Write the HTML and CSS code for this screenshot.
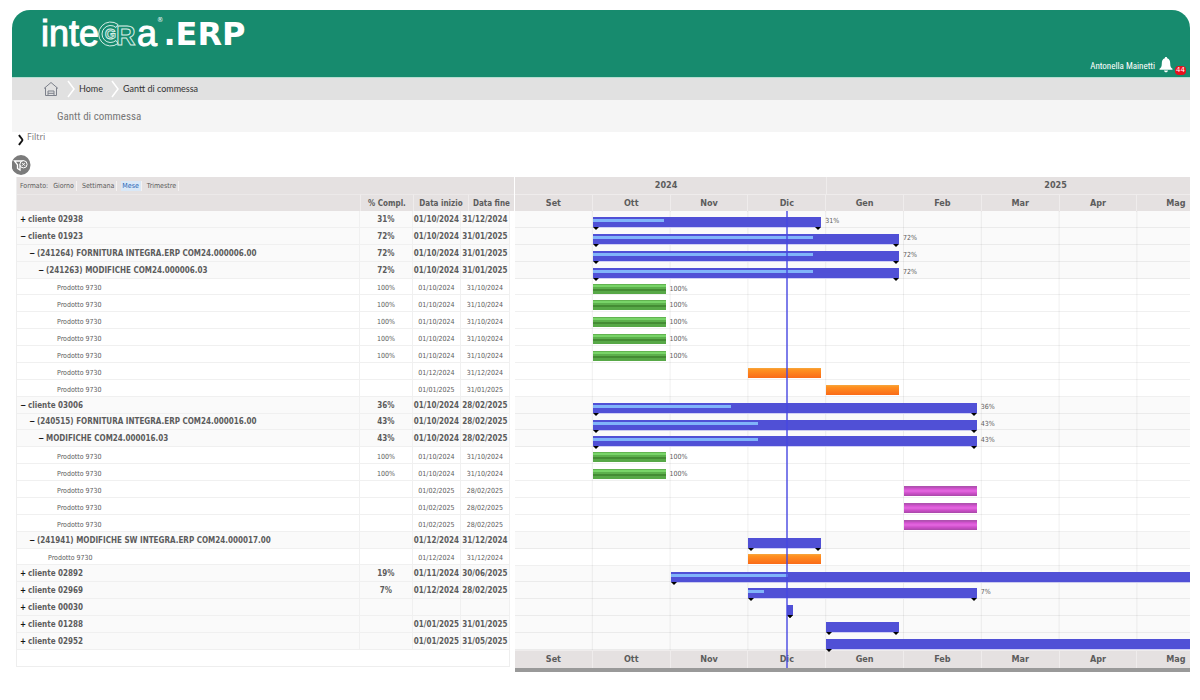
FILE: index.html
```html
<!DOCTYPE html>
<html lang="it">
<head>
<meta charset="utf-8">
<title>Gantt di commessa</title>
<link rel="stylesheet" href="styles.css">
</head>
<body>
<header class="top">
  <div class="logo"><span class="logo-light">inte</span><svg class="logo-mark" width="38" height="26" viewBox="0 0 38 26" fill="none" stroke="#d6eee6"><path d="M19 3.500A12 12 0 1 0 19 22.500M17 6.500A8.500 8.500 0 1 0 17 19.500M19 3.500L17 6.500M19 22.500L17 19.500"/><text class="mark-g" x="6" y="18">G</text><text class="mark-r" x="17" y="24">R</text></svg><span class="logo-light">a</span><sup class="logo-reg">®</sup><span class="logo-bold">.ERP</span></div>
  <div class="user">
    <a href="#" class="user-name">Antonella Mainetti</a>
    <button class="bell" aria-label="Notifiche">
      <svg width="14" height="16" viewBox="0 0 14 16"><path fill="#fff" d="M7 0c.8 0 1.200.5 1.200 1.300C10.600 2 11.200 4 11.200 6.500c0 3 .8 4.500 2.300 5.300v1H.5v-1c1.500-.8 2.300-2.300 2.300-5.300C2.800 4 3.400 2 5.800 1.300 5.800.5 6.200 0 7 0zM5 13.500h4c-.2 1.200-1 1.800-2 1.800s-1.800-.6-2-1.800z"/></svg>
    </button>
    <span class="badge">44</span>
  </div>
</header>
<nav class="crumbs">
  <a href="#" class="home" aria-label="Inizio"><svg width="16" height="16" viewBox="0 0 16 16" fill="none" stroke="#7d818b"><path d="M1 7.500L8 1.500l7 6M2.500 6.500V14.500h11V6.500M5 14.500V10h6v4.500M5 12.300h6"/></svg></a>
  <svg class="sep" width="8" height="18" viewBox="0 0 8 18"><path d="M1 1l6 8-6 8" fill="none" stroke="#fff" stroke-width="1.500"/></svg>
  <a href="#">Home</a>
  <svg class="sep" width="8" height="18" viewBox="0 0 8 18"><path d="M1 1l6 8-6 8" fill="none" stroke="#fff" stroke-width="1.500"/></svg>
  <a href="#">Gantt di commessa</a>
</nav>
<h1 class="title">Gantt di commessa</h1>
<button class="filters"><svg width="6" height="12" viewBox="0 0 6 12"><path d="M1 1c1 2 3 3.500 3.500 5C4 7.500 2 9 1 11" fill="none" stroke="#111" stroke-width="1.800"/></svg><span>Filtri</span></button>
<button class="clear" aria-label="Rimuovi filtri"><svg width="19" height="20" viewBox="0 0 19 20"><ellipse cx="9" cy="10" rx="9.500" ry="10" fill="#7b7b7b"/><path d="M2.500 6h8.500L8 9.800V15l-2.500-1.500V9.800z" fill="#7b7b7b" stroke="#fff" stroke-width="1.300"/><circle cx="11.500" cy="9.300" r="3.600" fill="#7b7b7b" stroke="#fff"/><path d="M10 7.800l3 3m0-3l-3 3" stroke="#fff"/></svg></button>

<main class="gantt">
  <table class="tasks">
    <colgroup><col><col class="c-pct"><col class="c-start"><col class="c-shift"><col class="c-end"><col class="c-edge"></colgroup>
    <thead>
      <tr><td colspan="6" class="format"><span>Formato:</span><button>Giorno</button><button>Settimana</button><button class="on">Mese</button><button>Trimestre</button></td></tr>
      <tr><th></th><th>% Compl.</th><th colspan="2">Data inizio</th><th colspan="2">Data fine</th></tr>
    </thead>
    <tbody>
      <tr class="group"><td><button>+</button>cliente 02938</td><td>31%</td><td>01/10/2024</td><td colspan="2">31/12/2024</td><td></td></tr>
      <tr class="group"><td><button>−</button>cliente 01923</td><td>72%</td><td>01/10/2024</td><td colspan="2">31/01/2025</td><td></td></tr>
      <tr class="group l1"><td><button>−</button>(241264) FORNITURA INTEGRA.ERP COM24.000006.00</td><td>72%</td><td>01/10/2024</td><td colspan="2">31/01/2025</td><td></td></tr>
      <tr class="group l2"><td><button>−</button>(241263) MODIFICHE COM24.000006.03</td><td>72%</td><td>01/10/2024</td><td colspan="2">31/01/2025</td><td></td></tr>
      <tr class="l4"><td>Prodotto 9730</td><td>100%</td><td>01/10/2024</td><td colspan="2">31/10/2024</td><td></td></tr>
      <tr class="l4"><td>Prodotto 9730</td><td>100%</td><td>01/10/2024</td><td colspan="2">31/10/2024</td><td></td></tr>
      <tr class="l4"><td>Prodotto 9730</td><td>100%</td><td>01/10/2024</td><td colspan="2">31/10/2024</td><td></td></tr>
      <tr class="l4"><td>Prodotto 9730</td><td>100%</td><td>01/10/2024</td><td colspan="2">31/10/2024</td><td></td></tr>
      <tr class="l4"><td>Prodotto 9730</td><td>100%</td><td>01/10/2024</td><td colspan="2">31/10/2024</td><td></td></tr>
      <tr class="l4"><td>Prodotto 9730</td><td></td><td>01/12/2024</td><td colspan="2">31/12/2024</td><td></td></tr>
      <tr class="l4"><td>Prodotto 9730</td><td></td><td>01/01/2025</td><td colspan="2">31/01/2025</td><td></td></tr>
      <tr class="group"><td><button>−</button>cliente 03006</td><td>36%</td><td>01/10/2024</td><td colspan="2">28/02/2025</td><td></td></tr>
      <tr class="group l1"><td><button>−</button>(240515) FORNITURA INTEGRA.ERP COM24.000016.00</td><td>43%</td><td>01/10/2024</td><td colspan="2">28/02/2025</td><td></td></tr>
      <tr class="group l2"><td><button>−</button>MODIFICHE COM24.000016.03</td><td>43%</td><td>01/10/2024</td><td colspan="2">28/02/2025</td><td></td></tr>
      <tr class="l4"><td>Prodotto 9730</td><td>100%</td><td>01/10/2024</td><td colspan="2">31/10/2024</td><td></td></tr>
      <tr class="l4"><td>Prodotto 9730</td><td>100%</td><td>01/10/2024</td><td colspan="2">31/10/2024</td><td></td></tr>
      <tr class="l4"><td>Prodotto 9730</td><td></td><td>01/02/2025</td><td colspan="2">28/02/2025</td><td></td></tr>
      <tr class="l4"><td>Prodotto 9730</td><td></td><td>01/02/2025</td><td colspan="2">28/02/2025</td><td></td></tr>
      <tr class="l4"><td>Prodotto 9730</td><td></td><td>01/02/2025</td><td colspan="2">28/02/2025</td><td></td></tr>
      <tr class="group l1"><td><button>−</button>(241941) MODIFICHE SW INTEGRA.ERP COM24.000017.00</td><td></td><td>01/12/2024</td><td colspan="2">31/12/2024</td><td></td></tr>
      <tr class="l3"><td>Prodotto 9730</td><td></td><td>01/12/2024</td><td colspan="2">31/12/2024</td><td></td></tr>
      <tr class="group"><td><button>+</button>cliente 02892</td><td>19%</td><td>01/11/2024</td><td colspan="2">30/06/2025</td><td></td></tr>
      <tr class="group"><td><button>+</button>cliente 02969</td><td>7%</td><td>01/12/2024</td><td colspan="2">28/02/2025</td><td></td></tr>
      <tr class="group"><td><button>+</button>cliente 00030</td><td></td><td></td><td colspan="2"></td><td></td></tr>
      <tr class="group"><td><button>+</button>cliente 01288</td><td></td><td>01/01/2025</td><td colspan="2">31/01/2025</td><td></td></tr>
      <tr class="group"><td><button>+</button>cliente 02952</td><td></td><td>01/01/2025</td><td colspan="2">31/05/2025</td><td></td></tr>
    </tbody>
    <tfoot><tr><td colspan="5"></td><td></td></tr></tfoot>
  </table>

  <section class="chart" aria-label="Diagramma">
    <div class="canvas">
      <div class="years"><span class="y24">2024</span><span class="y25">2025</span></div>
      <div class="months"><span>Set</span><span>Ott</span><span>Nov</span><span>Dic</span><span>Gen</span><span>Feb</span><span>Mar</span><span>Apr</span><span>Mag</span><span></span></div>
      <div class="lanes">
        <div class="lane group"><div class="bar sum" style="--from:1;--len:3"><i style="width:31%"></i><b>31%</b></div></div>
        <div class="lane group"><div class="bar sum" style="--from:1;--len:4"><i style="width:72%"></i><b>72%</b></div></div>
        <div class="lane group"><div class="bar sum" style="--from:1;--len:4"><i style="width:72%"></i><b>72%</b></div></div>
        <div class="lane group"><div class="bar sum" style="--from:1;--len:4"><i style="width:72%"></i><b>72%</b></div></div>
        <div class="lane"><div class="bar green" style="--from:1;--len:1"><b>100%</b></div></div>
        <div class="lane"><div class="bar green" style="--from:1;--len:1"><b>100%</b></div></div>
        <div class="lane"><div class="bar green" style="--from:1;--len:1"><b>100%</b></div></div>
        <div class="lane"><div class="bar green" style="--from:1;--len:1"><b>100%</b></div></div>
        <div class="lane"><div class="bar green" style="--from:1;--len:1"><b>100%</b></div></div>
        <div class="lane"><div class="bar orange" style="--from:3;--len:1"></div></div>
        <div class="lane"><div class="bar orange" style="--from:4;--len:1"></div></div>
        <div class="lane group"><div class="bar sum" style="--from:1;--len:5"><i style="width:36%"></i><b>36%</b></div></div>
        <div class="lane group"><div class="bar sum" style="--from:1;--len:5"><i style="width:43%"></i><b>43%</b></div></div>
        <div class="lane group"><div class="bar sum" style="--from:1;--len:5"><i style="width:43%"></i><b>43%</b></div></div>
        <div class="lane"><div class="bar green" style="--from:1;--len:1"><b>100%</b></div></div>
        <div class="lane"><div class="bar green" style="--from:1;--len:1"><b>100%</b></div></div>
        <div class="lane"><div class="bar purple" style="--from:5;--len:1"></div></div>
        <div class="lane"><div class="bar purple" style="--from:5;--len:1"></div></div>
        <div class="lane"><div class="bar purple" style="--from:5;--len:1"></div></div>
        <div class="lane group"><div class="bar sum" style="--from:3;--len:1"></div></div>
        <div class="lane"><div class="bar orange" style="--from:3;--len:1"></div></div>
        <div class="lane group"><div class="bar sum" style="--from:2;--len:8"><i style="width:19%"></i></div></div>
        <div class="lane group"><div class="bar sum" style="--from:3;--len:3"><i style="width:7%"></i><b>7%</b></div></div>
        <div class="lane group"><div class="bar sum day" style="--from:3.5"></div></div>
        <div class="lane group"><div class="bar sum" style="--from:4;--len:1"></div></div>
        <div class="lane group"><div class="bar sum" style="--from:4;--len:5"></div></div>
      </div>
      <div class="months foot"><span>Set</span><span>Ott</span><span>Nov</span><span>Dic</span><span>Gen</span><span>Feb</span><span>Mar</span><span>Apr</span><span>Mag</span><span></span></div>
      <div class="today" style="--from:3.5"></div>
    </div>
    <div class="scroll"></div>
  </section>
</main>
</body>
</html>
```
FILE: styles.css
```css
* { box-sizing: border-box; }
body {
  margin: 0;
  padding: 10px 10px 0 12px;
  background: #fff;
  color: #5c5c5c;
  font-family: "DejaVu Sans Condensed", "DejaVu Sans", sans-serif;
  font-size: 8px;
}
button { border: 0; padding: 0; margin: 0; background: none; font: inherit; color: inherit; cursor: pointer; }
a { color: inherit; text-decoration: none; }
svg { display: block; }

.top {
  display: flex;
  justify-content: space-between;
  height: 68px;
  padding-left: 29px;
  background: #178b6e;
  border-bottom: 1px solid #b5ddd1;
  border-radius: 18px 18px 0 0;
  color: #fff;
}
.logo { display: flex; align-items: center; height: 48px; }
.logo-light { font: 36px/44px "Liberation Sans", sans-serif; -webkit-text-stroke: 1px #fff; }
.logo-mark { overflow: visible; }
.logo-mark text { font-family: "Liberation Sans", sans-serif; font-weight: bold; }
.mark-g { font-size: 14px; }
.mark-r { font-size: 27px; }
.logo-reg { align-self: flex-start; font-size: 7px; line-height: 20px; }
.logo-bold { font: bold 32px/48px "DejaVu Sans", sans-serif; }
.user { display: flex; align-items: flex-end; padding: 0 4px 2px 0; }
.user-name { font: 9px/18px "Roboto Condensed", "Liberation Sans", sans-serif; }
.bell { margin: 0 2px 2px 4px; }
.badge { background: #e8101c; border-radius: 4px; padding: 0 1px; font: 7px/9px "DejaVu Sans", sans-serif; }

.crumbs { display: flex; align-items: center; gap: 4px; height: 22px; padding-left: 31px; background: #e1e1e1; color: #333; font: 9px/20px Lato, sans-serif; }
.sep { margin-left: 4px; }
.title { margin: 0; padding-left: 45px; background: #f5f5f5; color: #777; font: 11px/34px "Roboto Condensed", "Liberation Sans", sans-serif; height: 32px; }
.filters { display: flex; align-items: center; gap: 3px; margin-left: 6px; color: #777; font: 9px/10px "Open Sans", sans-serif; }
.filters svg { margin-top: 2px; }
.filters span { padding-bottom: 4px; }
.clear { display: block; margin: 9px 0 2px; }

.gantt { display: flex; align-items: flex-start; padding-left: 4px; }
.tasks { flex: 0 0 498px; width: 498px; height: 490px; table-layout: fixed; border-collapse: separate; border-spacing: 0; border-left: 1px solid #eee; margin-right: 1px; }
.c-pct { width: 53px; }
.c-start { width: 48px; }
.c-shift { width: 7px; }
.c-end { width: 42px; }
.c-edge { width: 4px; }
.tasks th, .tasks td { padding: 1px 0 0; line-height: 10px; text-align: center; white-space: nowrap; }
.tasks thead tr, .tasks tfoot tr { height: 17px; }
.tasks thead { background: #e5e1e1; }
.tasks thead th { font-size: 8px; border-top: 1px solid #ece9e9; border-left: 1px solid #efecec; }
.tasks thead th:first-child { border-left: 0; }
.tasks .format { text-align: left; font-size: 7px; padding-left: 3px; }
.format button { margin-left: 4px; padding: 0 2px 0 1px; border-right: 1px solid #f4f2f2; }
.format .on { background: #d9e8f7; color: #2864b4; }
.tasks tbody td { padding: 4px 0 0; font-size: 7px; border-right: 1px solid #f0f0f0; border-bottom: 1px solid #f0f0f0; }
.tasks tbody td:first-child { text-align: left; padding-left: 3px; }
.tasks tbody td:last-child, .tasks tfoot td:last-child { border: 0; background: #fff; }
.tasks tbody .group td { padding-top: 3px; padding-bottom: 1px; font-size: 8px; font-weight: bold; background: #fafafa; }
.tasks tbody .group td:last-child { background: #fff; }
.tasks tbody .l1 td:first-child { padding-left: 12px; }
.tasks tbody .l2 td:first-child { padding-left: 21px; }
.tasks tbody .l3 td:first-child { padding-left: 31px; }
.tasks tbody .l4 td:first-child { padding-left: 40px; }
.group button { width: 8px; text-align: left; color: #111; }
.tasks tfoot td { border-bottom: 1px solid #eee; border-right: 1px solid #eee; }

.chart { flex: 1; min-width: 0; overflow: hidden; }
.canvas { position: relative; width: 778px; }
.years, .months { display: grid; grid-template-columns: repeat(10, 1fr); height: 17px; background: #e5e1e1; text-align: center; font-weight: bold; font-size: 9px; line-height: 17px; }
.years span { padding-right: 9px; }
.y24 { grid-column: 1 / 5; }
.y25 { grid-column: 5 / 11; border-left: 1px solid #efecec; }
.months span { border-top: 1px solid #efecec; border-right: 1px solid #efecec; }
.lanes {
  display: grid;
  grid-auto-rows: 1fr;
  height: 439px;
  background: linear-gradient(to left, #f0f0f0 1px, transparent 1px) 0 0 / 10% 100%;
}
.lane { position: relative; border-bottom: 1px solid rgba(0, 0, 0, 0.06); }
.lane.group { background: rgba(0, 0, 0, 0.02); }
.bar { position: absolute; top: 5px; height: 10px; left: calc(var(--from) * 10%); width: calc(var(--len) * 10% - 5px); }
.bar b { position: absolute; left: 100%; top: 0; margin-left: 4px; font-weight: normal; font-size: 7px; line-height: 10px; }
.sum { top: 6px; background: #5050d6; box-shadow: 0 1px #d0d0f5; }
.sum b { top: -1px; }
.sum i { position: absolute; left: 0; top: 2px; height: 3px; background: #80b4fa; }
.sum::before, .sum::after { content: ""; position: absolute; top: 10px; border: 3px solid transparent; border-top-color: #000; border-bottom: 0; }
.sum::before { left: 0; }
.sum::after { right: 0; }
.day { width: 6px; }
.green { background: linear-gradient(#62b450 0 1px, #78d468 1px 3px, #5cb04c 3px 5px, #448c34 5px 7px, #57a847 7px); }
.orange { background: linear-gradient(#f5a840, #ff9020 20%, #fa6a18); }
.purple { background: linear-gradient(#b050b0 0 1px, #d854d4 3px, #e468e0 5px, #d050cc 7px, #a848a8); }
.foot { height: 18px; }
.today { position: absolute; top: 34px; bottom: 0; left: calc(var(--from) * 10% - 1px); width: 2px; background: rgba(70, 70, 225, 0.7); }
.scroll { height: 4px; background: #999; }
```
